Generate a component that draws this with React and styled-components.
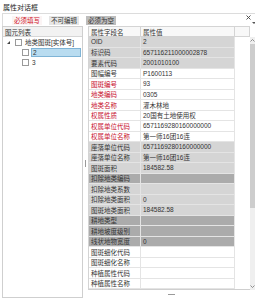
import React from 'react';
import styled, { createGlobalStyle } from 'styled-components';

const Global = createGlobalStyle`
  html, body { margin: 0; padding: 0; background: #fff; }
  body {
    font-family: "Liberation Sans", "Noto Sans CJK SC", sans-serif;
    font-size: 6.5px;
    color: #333;
  }
  * { box-sizing: border-box; }
`;

const Window = styled.div`
  width: 255px;
  height: 300px;
  overflow: hidden;
  display: flex;
  flex-direction: column;
  background: #fff;
`;

const TitleBar = styled.div`
  height: 13px;
  display: flex;
  align-items: center;
  padding-left: 3px;
  font-size: 7px;
  color: #222;
`;

const Toolbar = styled.div`
  height: 13px;
  margin-left: 2px;
  display: flex;
  align-items: center;
  gap: 7px;
  padding-left: 9px;
  border-top: 1px solid #dcdcdc;
  border-left: 1px solid #dcdcdc;
`;

const Legend = styled.span`
  height: 9px;
  padding: 0 2px;
  display: flex;
  align-items: center;
  background: ${(p) => p.$bg};
  color: ${(p) => p.$color};
`;

const Controls = styled.div`
  margin-left: auto;
  width: 10px;
  height: 12px;
  display: flex;
  flex-direction: column;
  align-items: flex-start;
  justify-content: space-between;
  padding: 1px 0 2px 1px;
  flex: none;
`;

const DropMark = styled.span`
  width: 0;
  height: 0;
  margin-left: 6px;
  border-left: 2px solid transparent;
  border-right: 2px solid transparent;
  border-top: 2px solid #555;
`;

const Main = styled.div`
  flex: 1;
  display: flex;
  padding-left: 2px;
  min-height: 0;
`;

const LeftPanel = styled.div`
  width: 81px;
  margin-bottom: 2px;
  border: 1px solid #cfcfcf;
  display: flex;
  flex-direction: column;
`;

const PanelHeader = styled.div`
  height: 10px;
  display: flex;
  align-items: center;
  padding-left: 2px;
  background: #f2f2f2;
  border-bottom: 1px solid #d6d6d6;
`;

const TreeRow = styled.div`
  height: 10px;
  display: flex;
  align-items: center;
  padding-left: ${(p) => p.$indent}px;
  gap: 2px;
`;

const Expander = styled.span`
  width: 0;
  height: 0;
  border-left: 3px solid transparent;
  border-bottom: 3px solid #444;
  margin-right: 3px;
`;

const Check = styled.span`
  width: 7px;
  height: 7px;
  border: 1px solid #9a9a9a;
  background: #fff;
  flex: none;
`;

const Label = styled.span`
  height: 9px;
  display: flex;
  align-items: center;
  padding-left: 1px;
  ${(p) =>
    p.$selected &&
    `flex: 1; margin-right: 1px; background: #b9dcf0; border: 1px solid #7fb4d6;`}
`;

const Splitter = styled.div`
  width: 5px;
  display: flex;
  align-items: center;
  justify-content: center;
`;

const Grip = styled.span`
  width: 1px;
  height: 7px;
  background: #9a9a9a;
`;

const RightPanel = styled.div`
  flex: 1;
  display: flex;
  flex-direction: column;
  min-width: 0;
`;

const TableArea = styled.div`
  display: flex;
`;

const Grid = styled.div`
  display: grid;
  grid-template-columns: 52px 94px 15px;
  grid-template-rows: 11px;
  grid-auto-rows: 10.5px;
  border-left: 1px solid #d4d4d4;
  border-bottom: 1px solid #cfcfcf;
`;

const HeadCell = styled.div`
  display: flex;
  align-items: center;
  padding-left: 2px;
  background: #f8f8f8;
  border-top: 1px solid #d4d4d4;
  border-right: 1px solid #d4d4d4;
  border-bottom: 1px solid #d4d4d4;
`;

const rowBg = { ro: '#d5d5d5', empty: '#ababab', req: '#fff', normal: '#fff' };

const Cell = styled.div`
  display: flex;
  align-items: center;
  padding-left: 2px;
  white-space: nowrap;
  overflow: hidden;
  background: ${(p) => rowBg[p.$kind]};
  color: ${(p) => (p.$red ? '#c8102e' : '#333')};
  border-right: 1px solid #e4e4e4;
  border-bottom: 1px solid #e4e4e4;
`;

const Blank = styled.div``;

const Scrollbar = styled.div`
  width: 7px;
  margin-top: 11px;
  display: flex;
  flex-direction: column;
  align-items: center;
  background: #efefef;
`;

const ArrowBox = styled.span`
  height: 7px;
  display: flex;
  align-items: center;
  justify-content: center;
`;

const Thumb = styled.span`
  width: 5px;
  height: 164px;
  background: #cdcdcd;
`;

const Track = styled.span`
  flex: 1;
`;

const BottomBar = styled.div`
  height: 8px;
  display: flex;
  align-items: center;
  justify-content: center;
`;

const HGrip = styled.span`
  width: 7px;
  height: 1px;
  background: #9a9a9a;
`;

const rows = [
  ['OID', '2', 'ro'],
  ['标识码', '657116211000002878', 'ro'],
  ['要素代码', '2001010100', 'ro'],
  ['图幅编号', 'P1600113', 'normal'],
  ['图斑编号', '93', 'req'],
  ['地类编码', '0305', 'req'],
  ['地类名称', '灌木林地', 'req'],
  ['权属性质', '20国有土地使用权', 'req'],
  ['权属单位代码', '6571169280160000000', 'req'],
  ['权属单位名称', '第一师16团16连', 'req'],
  ['座落单位代码', '6571169280160000000', 'ro'],
  ['座落单位名称', '第一师16团16连', 'ro'],
  ['图斑面积', '184582.58', 'ro'],
  ['扣除地类编码', '', 'empty'],
  ['扣除地类系数', '', 'ro'],
  ['扣除地类面积', '0', 'ro'],
  ['图斑地类面积', '184582.58', 'ro'],
  ['耕地类型', '', 'empty'],
  ['耕地坡度级别', '', 'empty'],
  ['线状地物宽度', '0', 'empty'],
  ['图斑细化代码', '', 'normal'],
  ['图斑细化名称', '', 'normal'],
  ['种植属性代码', '', 'normal'],
  ['种植属性名称', '', 'normal'],
];

const CloseIcon = () => (
  <svg width="5" height="5" viewBox="0 0 5 5">
    <path d="M0.5 0.5L4.5 4.5M4.5 0.5L0.5 4.5" stroke="#444" strokeWidth="0.9" />
  </svg>
);

const Chevron = ({ up }) => (
  <svg width="5" height="3" viewBox="0 0 5 3">
    <path d={up ? 'M0.5 2.5L2.5 0.5L4.5 2.5' : 'M0.5 0.5L2.5 2.5L4.5 0.5'} stroke="#777" strokeWidth="0.8" fill="none" />
  </svg>
);

export default function App() {
  return (
    <Window>
      <Global />
      <TitleBar>属性对话框</TitleBar>
      <Toolbar>
        <Legend $bg="#fbf4f4" $color="#d0101e">必须填写</Legend>
        <Legend $bg="#e6e6e6" $color="#333">不可编辑</Legend>
        <Legend $bg="#bdbdbd" $color="#333">必须为空</Legend>
        <Controls>
          <CloseIcon />
          <DropMark />
        </Controls>
      </Toolbar>
      <Main>
        <LeftPanel>
          <PanelHeader>图元列表</PanelHeader>
          <TreeRow $indent={4}>
            <Expander />
            <Check />
            <Label>地类图斑[实体号]</Label>
          </TreeRow>
          <TreeRow $indent={19}>
            <Check />
            <Label $selected>2</Label>
          </TreeRow>
          <TreeRow $indent={19}>
            <Check />
            <Label>3</Label>
          </TreeRow>
        </LeftPanel>
        <Splitter>
          <Grip />
        </Splitter>
        <RightPanel>
          <TableArea>
            <Grid>
              <HeadCell>属性字段名</HeadCell>
              <HeadCell>属性值</HeadCell>
              <HeadCell />
              {rows.map(([name, value, kind]) => (
                <React.Fragment key={name}>
                  <Cell $kind={kind} $red={kind === 'req'}>{name}</Cell>
                  <Cell $kind={kind}>{value}</Cell>
                  <Blank />
                </React.Fragment>
              ))}
            </Grid>
            <Scrollbar>
              <ArrowBox><Chevron up /></ArrowBox>
              <Thumb />
              <Track />
              <ArrowBox><Chevron /></ArrowBox>
            </Scrollbar>
          </TableArea>
          <BottomBar>
            <HGrip />
          </BottomBar>
        </RightPanel>
      </Main>
    </Window>
  );
}
